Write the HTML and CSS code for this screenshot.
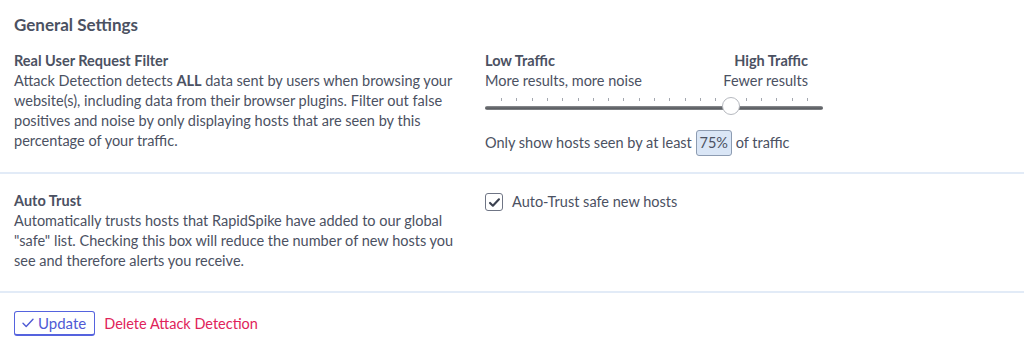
FILE: index.html
```html
<!DOCTYPE html>
<html lang="en">
<head>
    <meta charset="UTF-8">
    <meta name="viewport" content="width=device-width, initial-scale=1.0">
    <title>Attack Detection Settings</title>
    <link rel="stylesheet" href="styles.css">
</head>
<body>
    <h2 class="page-title">General Settings</h2>

    <div class="setting">
        <div class="setting-info">
            <div class="setting-name">Real User Request Filter</div>
            <p>Attack Detection detects <b>ALL</b> data sent by users when browsing your website(s), including data from their browser plugins. Filter out false positives and noise by only displaying hosts that are seen by this percentage of your traffic.</p>
        </div>
        <div class="setting-control">
            <div class="range-labels">
                <div>
                    <div class="range-name">Low Traffic</div>
                    <div>More results, more noise</div>
                </div>
                <div class="align-right">
                    <div class="range-name">High Traffic</div>
                    <div>Fewer results</div>
                </div>
            </div>
            <div class="slider">
                <div class="ticks" id="ticks"></div>
                <div class="track"></div>
                <div class="thumb"></div>
            </div>
            <div class="threshold">Only show hosts seen by at least <span class="value-box">75%</span> of traffic</div>
        </div>
    </div>

    <div class="setting">
        <div class="setting-info">
            <div class="setting-name">Auto Trust</div>
            <p>Automatically trusts hosts that RapidSpike have added to our global "safe" list. Checking this box will reduce the number of new hosts you see and therefore alerts you receive.</p>
        </div>
        <div class="setting-control">
            <label class="check">
                <span class="check-box">
                    <svg width="13" height="13" viewBox="0 0 16 16"><path d="M2.5 8.5l3.5 3.5 7.5-8" fill="none" stroke="#3b4150" stroke-width="2.6" stroke-linecap="round" stroke-linejoin="round"/></svg>
                </span>
                Auto-Trust safe new hosts
            </label>
        </div>
    </div>

    <div class="actions">
        <button class="btn-update">
            <svg width="12" height="10" viewBox="0 0 12 10"><path d="M1 5.2l3.2 3.2L11 1.2" fill="none" stroke="#4f5bd5" stroke-width="1.4" stroke-linecap="round" stroke-linejoin="round"/></svg>
            Update
        </button>
        <a href="#" class="delete-link">Delete Attack Detection</a>
    </div>

    <script>
        const ticks = document.getElementById('ticks');
        for (let i = 0; i <= 20; i++) {
            const t = document.createElement('span');
            t.style.left = (i * 5) + '%';
            ticks.appendChild(t);
        }
    </script>
</body>
</html>
```

FILE: styles.css
```css
body {
    margin: 0;
    background-color: #fff;
    color: #4b5162;
    font-family: "Lato", "Noto Sans", sans-serif;
    font-size: 14.5px;
    line-height: 20px;
}
.page-title {
    margin: 0;
    padding: 15px 14px 0;
    font-size: 17px;
    line-height: 20px;
    font-weight: 700;
}
.setting {
    display: grid;
    grid-template-columns: 456px 338px;
    column-gap: 15px;
    padding: 16px 14px 16px;
    border-bottom: 2px solid #e2ebf7;
}
.setting + .setting {
    padding: 17px 14px 20px;
}
.setting-name {
    font-weight: 700;
}
.setting-info p {
    margin: 0;
}
.range-labels {
    display: flex;
    justify-content: space-between;
    margin-right: 15px;
}
.range-name {
    font-weight: 700;
}
.align-right {
    text-align: right;
}
.slider {
    position: relative;
    height: 19px;
    padding-top: 7px;
}
.ticks {
    position: relative;
    margin: 0 16px;
    height: 3px;
}
.ticks span {
    position: absolute;
    top: 0;
    width: 1px;
    height: 3px;
    background-color: #a4a8b0;
}
.track {
    height: 4px;
    margin-top: 5px;
    border-radius: 2px;
    background: linear-gradient(#909296, #55585c 55%, #8a8c90);
}
.thumb {
    position: absolute;
    top: 6px;
    left: calc(16px + (100% - 32px) * 0.75);
    width: 18px;
    height: 18px;
    margin-left: -9px;
    border: 1px solid #b6b9bf;
    border-radius: 50%;
    background-color: #fff;
    box-sizing: border-box;
}
.threshold {
    margin-top: 13px;
    line-height: 26px;
}
.value-box {
    display: inline-block;
    padding: 2px 3px;
    border: 1px solid #8d9cb2;
    border-radius: 3px;
    background-color: #dae6f6;
    line-height: 20px;
    vertical-align: top;
}
.check {
    display: flex;
    align-items: center;
    gap: 9px;
    margin-top: 1px;
}
.check-box {
    display: flex;
    align-items: center;
    justify-content: center;
    width: 18px;
    height: 18px;
    border: 1px solid #6f7585;
    border-radius: 3px;
    box-sizing: border-box;
}
.actions {
    display: flex;
    align-items: center;
    gap: 9px;
    padding: 18px 14px;
}
.btn-update {
    display: flex;
    align-items: center;
    gap: 4px;
    height: 25px;
    padding: 0 8px 0 7px;
    border: 1px solid #5563de;
    border-bottom-width: 2px;
    border-radius: 3px;
    background-color: #fff;
    color: #4f5bd5;
    font: inherit;
    font-size: 15px;
}
.delete-link {
    color: #e0235a;
    text-decoration: none;
    font-size: 14.5px;
}
```
